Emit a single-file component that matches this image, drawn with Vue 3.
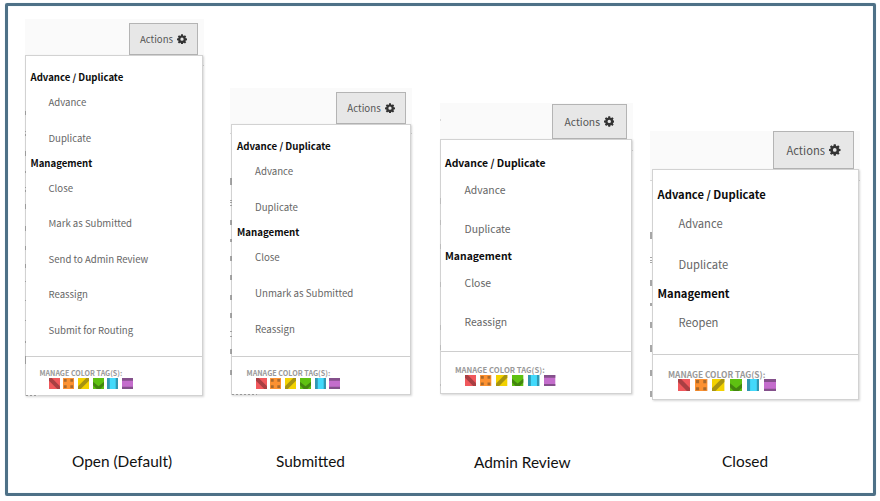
<script setup>
const panels = [
  {
    key: 'open',
    caption: 'Open (Default)',
    groups: [
      { title: 'Advance / Duplicate', items: ['Advance', 'Duplicate'] },
      { title: 'Management', items: ['Close', 'Mark as Submitted', 'Send to Admin Review', 'Reassign', 'Submit for Routing'] },
    ],
    marks: [[92, 4], [112, 1], [115, 2], [132, 5], [152, 2], [168, 1], [171, 2], [185, 5], [207, 5], [227, 4], [245, 4], [262, 1], [281, 1], [301, 1], [322, 2], [337, 8]],
  },
  {
    key: 'submitted',
    caption: 'Submitted',
    groups: [
      { title: 'Advance / Duplicate', items: ['Advance', 'Duplicate'] },
      { title: 'Management', items: ['Close', 'Unmark as Submitted', 'Reassign'] },
    ],
    marks: [[90, 7], [112, 1], [114, 1], [117, 1], [132, 5], [151, 3], [168, 5], [187, 5], [207, 5], [225, 5], [243, 1], [248, 1], [261, 5], [282, 5]],
  },
  {
    key: 'review',
    caption: 'Admin Review',
    groups: [
      { title: 'Advance / Duplicate', items: ['Advance', 'Duplicate'] },
      { title: 'Management', items: ['Close', 'Reassign'] },
    ],
    marks: [[16, 2], [95, 6], [117, 5], [141, 5], [179, 5], [222, 5], [242, 5], [281, 2]],
  },
  {
    key: 'closed',
    caption: 'Closed',
    groups: [
      { title: 'Advance / Duplicate', items: ['Advance', 'Duplicate'] },
      { title: 'Management', items: ['Reopen'] },
    ],
    marks: [[101, 7], [126, 1], [129, 1], [131, 1], [149, 6], [172, 3], [191, 6], [214, 7], [239, 6], [260, 6]],
  },
]
const tags = ['red', 'orange', 'yellow', 'green', 'blue', 'purple']
</script>

<template>
  <main class="frame">
    <section v-for="p in panels" :key="p.key" class="panel" :class="p.key">
      <div class="shot">
        <div class="toolbar">
          <button class="actions">
            <span>Actions</span>
            <svg class="gear" viewBox="0 0 16 16">
              <path fill-rule="evenodd" d="M6.6 0.5h2.8l.4 2 1.2.5 1.7-1.2 2 2-1.2 1.7.5 1.2 2 .3v2.8l-2 .4-.5 1.2 1.2 1.7-2 2-1.7-1.2-1.2.5-.4 2H6.6l-.4-2-1.2-.5-1.7 1.2-2-2 1.2-1.7-.5-1.2-2-.4V7l2-.3.5-1.2-1.2-1.7 2-2L5 3l1.2-.5zM8 5.6a2.6 2.6 0 1 0 0 5.200a2.6 2.6 0 0 0 0-5.200z" />
            </svg>
          </button>
        </div>
        <div class="menu">
          <div class="groups">
            <template v-for="g in p.groups" :key="g.title">
              <h2>{{ g.title }}</h2>
              <a v-for="item in g.items" :key="item">{{ item }}</a>
            </template>
          </div>
          <div class="tagbox">
            <h3>MANAGE COLOR TAG(S):</h3>
            <div class="tags">
              <svg v-for="t in tags" :key="t" class="tag" :class="t" viewBox="0 0 12 12">
                <rect class="base" width="12" height="12" />
                <path v-if="t === 'red'" d="M0 0h3l9 9v3H9L0 3z" />
                <path v-else-if="t === 'orange'" d="M1 1h3v3H1zM8 1h3v3H8zM1 8h3v3H1zM8 8h3v3H8z" />
                <path v-else-if="t === 'yellow'" d="M0 9l9-9h3v3l-9 9H0z" />
                <path v-else-if="t === 'green'" d="M0 4l6 5 6-5v4l-4 4H4L0 8z" />
                <path v-else-if="t === 'blue'" d="M0 0h3v12H0zM9.500 0H12v12H9.500z" />
                <path v-else d="M0 0h12v3H0zM0 9.500h12V12H0z" />
              </svg>
            </div>
          </div>
        </div>
        <svg class="marks" width="3" height="380" aria-hidden="true">
          <rect v-for="(m, i) in p.marks" :key="i" x="0" :y="m[0]" width="3" :height="m[1]" />
        </svg>
      </div>
      <p class="caption">{{ p.caption }}</p>
    </section>
  </main>
</template>

<style>
body {
  margin: 0;
  background: #fff;
}
</style>

<style scoped>
* {
  box-sizing: border-box;
}
.frame {
  display: flex;
  width: 871px;
  height: 493px;
  margin: 3px 0 0 5px;
  border: 3px solid #4e7187;
  border-radius: 2px;
  box-shadow: 0 0 1px #a9d0e0, inset 0 0 1px #a9d0e0;
  font-family: "Noto Sans CJK SC", sans-serif;
}
.panel {
  display: flex;
  flex: none;
  flex-direction: column;
  justify-content: space-between;
  width: var(--w);
  padding-top: var(--top);
  margin-left: var(--left);
}
.shot {
  position: relative;
  width: 100%;
  background: linear-gradient(#fafafa var(--line), #d8d8d8 var(--line), #d8d8d8 calc(var(--line) + 1px), transparent calc(var(--line) + 1px));
}
/* Clipped page text that peeks out beside the open menu */
.marks {
  position: absolute;
  left: 0;
  top: 0;
  width: var(--mw);
  fill: #8a8a8a;
  opacity: 0.75;
}
.review .marks {
  opacity: 0.3;
}
.toolbar {
  display: flex;
  justify-content: flex-end;
  height: var(--bar);
  padding: var(--gap) var(--right) 0 0;
}
.actions {
  display: flex;
  align-items: center;
  justify-content: center;
  gap: 4px;
  width: var(--bw);
  height: 100%;
  padding: 0;
  border: 1px solid #b4b4b4;
  background: #e7e7e7;
  color: #555;
  font-family: inherit;
  font-size: var(--bf);
}
.gear {
  width: var(--gear);
  height: var(--gear);
  fill: #333;
}
.menu {
  position: relative;
  height: var(--mh);
  margin: 0 1px 0 var(--ml);
  border: 1px solid #d2d2d2;
  background: #fff;
  box-shadow: 1px 1px 2px rgba(0, 0, 0, 0.16);
}
.open .menu::after,
.submitted .menu::after {
  content: "";
  position: absolute;
  left: 0;
  top: 100%;
  width: var(--peek);
  height: 1px;
  background: repeating-linear-gradient(90deg, #999 0 2px, #ddd 2px 4px);
}
.groups {
  height: var(--gh);
  padding: var(--pad) 0 0 var(--hx);
  border-bottom: 1px solid #cecece;
}
h2,
a {
  display: flex;
  align-items: center;
  margin: 0;
  white-space: nowrap;
  font-size: var(--f);
}
h2 {
  height: var(--hh);
  color: #0c0c0c;
  font-weight: 700;
}
a {
  height: var(--rh);
  padding-left: var(--indent);
  color: #666;
}
.tagbox {
  padding: var(--tp) 0 0 var(--tx);
}
h3 {
  height: 9.500px;
  margin: 0;
  color: #999;
  font-size: var(--tf);
  font-weight: 700;
  line-height: 9.500px;
  white-space: nowrap;
}
.tags {
  display: flex;
  gap: var(--tg);
  padding-left: var(--ti);
}
.tag {
  width: var(--ts);
  height: var(--ts);
}
.red { fill: #a83f43; }
.red .base { fill: #f0585c; }
.orange { fill: #a96a2d; }
.orange .base { fill: #fc9131; }
.yellow { fill: #a69312; }
.yellow .base { fill: #f3d200; }
.green { fill: #43850f; }
.green .base { fill: #5ec111; }
.blue { fill: #3097b2; }
.blue .base { fill: #42d9fb; }
.purple { fill: #84508b; }
.purple .base { fill: #c46dcc; }
.caption {
  margin: 0 0 22.5px;
  padding-left: var(--cx);
  color: #111;
  font-family: Lato, sans-serif;
  font-size: 15.4px;
  line-height: 20px;
  white-space: nowrap;
}
.review .caption {
  margin-bottom: 21.5px;
}
.open {
  --w: 179px; --top: 13px; --left: 17px; --bar: 36px; --gap: 4px; --right: 6px; --bw: 69px; --bf: 9.6px; --gear: 10px;
  --mh: 341px; --ml: 0px; --gh: 301px; --pad: 14px; --hx: 4.5px; --hh: 14.5px; --rh: 35.5px; --indent: 18px; --f: 9.6px;
  --tp: 11.5px; --tx: 13.5px; --tf: 7.1px; --tg: 3.7px; --ti: 9px; --ts: 11px; --cx: 47px;
  --line: 46px; --mw: 1px; --peek: 12px;
}
.submitted {
  --w: 182px; --top: 82px; --left: 26px; --bar: 36px; --gap: 4px; --right: 6px; --bw: 70px; --bf: 9.7px; --gear: 10px;
  --mh: 271px; --ml: 1px; --gh: 232px; --pad: 14px; --hx: 5px; --hh: 14.5px; --rh: 35.8px; --indent: 18px; --f: 9.7px;
  --tp: 11.5px; --tx: 14.500px; --tf: 7.2px; --tg: 3.8px; --ti: 9px; --ts: 11px; --cx: 46px;
  --line: 45px; --mw: 2px; --peek: 25px;
}
.review {
  --w: 193px; --top: 97px; --left: 28px; --bar: 36px; --gap: 1px; --right: 6px; --bw: 75px; --bf: 10.3px; --gear: 10.500px;
  --mh: 255px; --ml: 0px; --gh: 212px; --pad: 15px; --hx: 4px; --hh: 15.500px; --rh: 38.800px; --indent: 19.500px; --f: 10.400px;
  --tp: 13px; --tx: 14px; --tf: 7.7px; --tg: 4.700px; --ti: 9.500px; --ts: 11.300px; --cx: 34px;
  --line: 47px; --mw: 1px;
}
.closed {
  --w: 210px; --top: 125px; --left: 17px; --bar: 38px; --gap: 0px; --right: 6px; --bw: 81px; --bf: 11.2px; --gear: 11.500px;
  --mh: 231px; --ml: 2px; --gh: 185px; --pad: 16px; --hx: 4.500px; --hh: 16.500px; --rh: 41.300px; --indent: 21px; --f: 11.200px;
  --tp: 14.500px; --tx: 15px; --tf: 8.35px; --tg: 4.800px; --ti: 10px; --ts: 12.400px; --cx: 72px;
  --line: 49px; --mw: 2px;
}
</style>
